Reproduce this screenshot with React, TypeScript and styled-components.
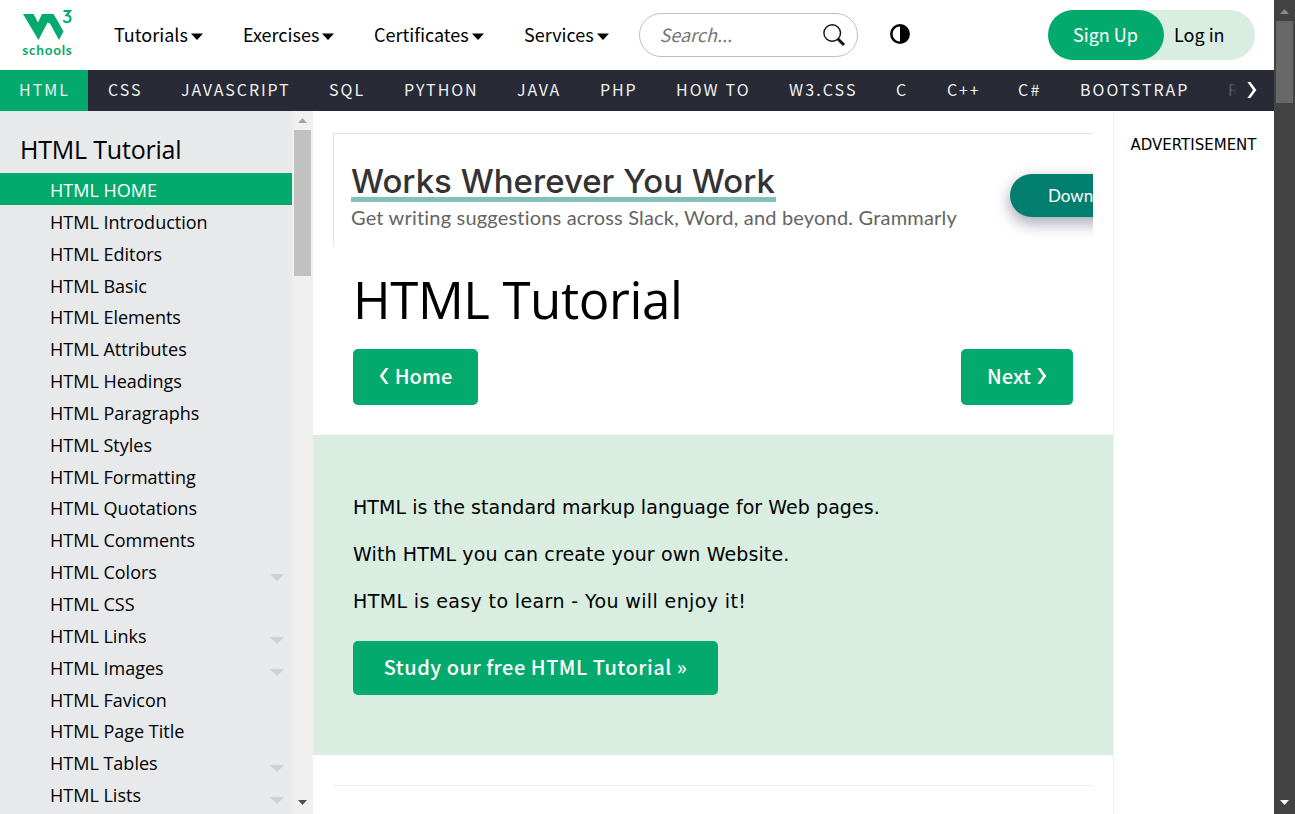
import React from 'react';
import styled, { createGlobalStyle } from 'styled-components';

const GREEN = '#04aa6d';
const MINT = '#d9eee1';
const SOURCE = '"Noto Sans CJK SC", sans-serif';
const SEGOE = '"Open Sans", sans-serif';
const VERDANA = '"DejaVu Sans", sans-serif';

const GlobalStyle = createGlobalStyle`
  * { box-sizing: border-box; }
  body { margin: 0; background: #fff; color: #000; overflow: hidden; }
  h1, h2, p { margin: 0; font-weight: 400; }
`;

const Page = styled.div`
  display: flex;
  width: 1295px;
  height: 814px;
  overflow: hidden;
`;
const Site = styled.div`
  display: flex;
  flex-direction: column;
  width: 1274px;
  height: 100%;
`;
const TopBar = styled.header`
  display: flex;
  height: 70px;
  flex: none;
  padding: 0 19px 0 19px;
  font: 18px/26px ${SOURCE};
`;
const Logo = styled.svg`
  width: 56px;
  height: 56px;
  margin-top: 6px;
  flex: none;
`;
const MainMenu = styled.nav`
  display: flex;
  height: 70px;
  margin-left: 39px;
`;
const MenuLink = styled.a<{ $w: number }>`
  display: flex;
  align-items: center;
  gap: 3px;
  width: ${(p) => p.$w}px;
  padding-bottom: 2px;
  white-space: nowrap;
`;
const Caret = styled.svg`
  width: 12px;
  height: 7px;
  margin-top: 5px;
`;
const SearchBox = styled.div`
  display: flex;
  justify-content: space-between;
  align-items: center;
  width: 219px;
  height: 44px;
  margin-top: 13px;
  padding: 0 11px 3px 20px;
  border: 1px solid #bfbfbf;
  border-radius: 22px;
  color: #757575;
  font-style: italic;
`;
const SearchIcon = styled.svg`
  width: 24px;
  height: 24px;
  margin-top: 3px;
`;
const ContrastIcon = styled.svg`
  width: 20px;
  height: 20px;
  margin: 24px 0 0 32px;
`;
const Account = styled.div`
  display: flex;
  width: 207px;
  height: 50px;
  margin: 10px 0 0 auto;
  border-radius: 25px;
  background: ${MINT};
  line-height: 48px;
`;
const SignUp = styled.a`
  width: 116px;
  padding-left: 25px;
  border-radius: 25px;
  background: ${GREEN};
  color: #fff;
`;
const LogIn = styled.a`
  padding-left: 10px;
`;
const SubNav = styled.nav`
  position: relative;
  display: flex;
  height: 41px;
  flex: none;
  overflow: hidden;
  background: #282a35;
  color: #f1f1f1;
  font: 16px/38px ${SOURCE};
`;
const Topic = styled.a<{ $w: number; $active?: boolean; $ls?: number }>`
  flex: none;
  width: ${(p) => p.$w}px;
  height: 41px;
  padding-left: ${(p) => (p.$active ? 19 : 20)}px;
  letter-spacing: ${(p) => p.$ls ?? 1.85}px;
  white-space: nowrap;
  background: ${(p) => (p.$active ? GREEN : 'transparent')};
`;
const ScrollNext = styled.div`
  position: absolute;
  top: 0;
  right: 0;
  display: flex;
  width: 64px;
  height: 41px;
  padding: 12px 0 0 37px;
  background: linear-gradient(90deg, rgba(40, 42, 53, 0), #282a35 42%);
`;
const Body = styled.div`
  display: flex;
  flex: 1;
  min-height: 0;
`;
const Sidebar = styled.aside`
  width: 292px;
  height: 703px;
  overflow: hidden;
  padding-top: 20px;
  background: #e7e9eb;
  font-family: ${SEGOE};
`;
const SidebarTitle = styled.h2`
  height: 42px;
  padding-left: 20px;
  font-size: 25px;
  line-height: 37px;
  letter-spacing: -0.2px;
`;
const Lesson = styled.a<{ $active?: boolean }>`
  display: flex;
  justify-content: space-between;
  height: 31.85px;
  padding: 0 8px 0 50px;
  font-size: 18px;
  line-height: 34px;
  color: ${(p) => (p.$active ? '#fff' : '#000')};
  background: ${(p) => (p.$active ? GREEN : 'transparent')};
`;
const LessonCaret = styled.svg`
  width: 14px;
  height: 7px;
  margin-top: 18.5px;
`;
const Track = styled.div<{ $dark?: boolean }>`
  display: flex;
  flex-direction: column;
  align-items: center;
  flex: none;
  width: 21px;
  height: 100%;
  padding: ${(p) => (p.$dark ? 9 : 7)}px 0 9px;
  background: ${(p) => (p.$dark ? '#424242' : '#f0f0f0')};
`;
const Thumb = styled.div<{ $dark?: boolean }>`
  width: 17px;
  height: ${(p) => (p.$dark ? 82 : 146)}px;
  margin: 7px 0 auto;
  background: ${(p) => (p.$dark ? '#686868' : '#c1c1c1')};
`;
const Arrow = styled.svg`
  width: 9px;
  height: 5px;
`;
const Main = styled.main`
  width: 800px;
  padding-top: 22px;
`;
const Ad = styled.section`
  display: flex;
  width: 760px;
  height: 113px;
  margin-left: 20px;
  overflow: hidden;
  border: solid #e3e3e3;
  border-width: 1px 0 0 1px;
`;
const AdCopy = styled.div`
  width: 676px;
  flex: none;
  padding: 30px 0 0 17px;
`;
const AdTitle = styled.h2`
  width: 425px;
  height: 38px;
  border-bottom: 5px solid #84c0b8;
  color: #333;
  font: 500 33px/34px Inter, sans-serif;
  white-space: nowrap;
`;
const AdText = styled.p`
  margin-top: 2px;
  color: #646464;
  font: 20px/26px Lato, sans-serif;
  letter-spacing: 0.19px;
  white-space: nowrap;
`;
const AdButton = styled.a`
  flex: none;
  width: 150px;
  height: 43px;
  margin-top: 40px;
  padding-left: 38px;
  border-radius: 22px;
  background: #027e6f;
  box-shadow: 0 6px 16px rgba(20, 24, 60, 0.4);
  color: #fff;
  font: 17px/43px Lato, sans-serif;
`;
const PageTitle = styled.h1`
  height: 103px;
  padding: 17px 0 0 40px;
  font: 51px/72px ${SEGOE};
  letter-spacing: -0.4px;
`;
const Pager = styled.div`
  display: flex;
  justify-content: space-between;
  padding: 0 40px 30px;
`;
const Button = styled.a<{ $w: number; $h?: number; $ls?: number }>`
  display: flex;
  align-items: center;
  justify-content: center;
  gap: 6px;
  width: ${(p) => p.$w}px;
  height: ${(p) => p.$h ?? 56}px;
  padding-bottom: 2px;
  border-radius: 5px;
  background: ${GREEN};
  color: #fff;
  font: 500 20px/30px ${SOURCE};
  letter-spacing: ${(p) => p.$ls ?? 0.1}px;
  white-space: nowrap;
`;
const Chevron = styled.svg`
  width: 10px;
  height: 16px;
`;
const Intro = styled.section`
  height: 320px;
  padding: 60px 40px 0;
  background: ${MINT};
`;
const Sentence = styled.p<{ $ls: number }>`
  height: 47px;
  font: 19px/25px ${VERDANA};
  letter-spacing: ${(p) => p.$ls}px;
  white-space: nowrap;
`;
const IntroAction = styled.div`
  padding-top: 5px;
`;
const Divider = styled.div`
  height: 1px;
  margin: 30px 20px 0;
  background: #eee;
`;
const RightColumn = styled.aside`
  flex: 1;
  margin-top: 2px;
  padding: 23px 0 0 16.5px;
  border-left: 1px solid #f1f1f1;
  font: 15px/18px ${VERDANA};
`;

const topics: [string, number, number?][] = [
  ['HTML', 88, 2], ['CSS', 73, 2], ['JAVASCRIPT', 148, 1.9], ['SQL', 75, 2], ['PYTHON', 113, 1.95],
  ['JAVA', 83], ['PHP', 76], ['HOW TO', 113, 2.1], ['W3.CSS', 107, 2.1], ['C', 51],
  ['C++', 71], ['C#', 62, 2.3], ['BOOTSTRAP', 148, 2], ['REACT', 100],
];
const lessons = [
  'HOME', 'Introduction', 'Editors', 'Basic', 'Elements', 'Attributes', 'Headings', 'Paragraphs', 'Styles',
  'Formatting', 'Quotations', 'Comments', 'Colors', 'CSS', 'Links', 'Images', 'Favicon', 'Page Title',
  'Tables', 'Lists',
];
const expandable = ['Colors', 'Links', 'Images', 'Tables', 'Lists'];
const menu: [string, number][] = [['Tutorials', 129], ['Exercises', 131], ['Certificates', 150], ['Services', 114.5]];

const ArrowGlyph = ({ up, color }: { up?: boolean; color: string }) => (
  <Arrow viewBox="0 0 9 5">
    <path d={up ? 'M0 5L4.5 0L9 5Z' : 'M0 0H9L4.5 5Z'} fill={color} />
  </Arrow>
);
const ChevronGlyph = ({ left }: { left?: boolean }) => (
  <Chevron viewBox="0 0 10 16">
    <path
      d={left ? 'M6.6 0H9.6L4 8L9.6 16H6.6L0.6 8Z' : 'M0.4 0H3.4L9.4 8L3.4 16H0.4L6 8Z'}
      fill="#fff"
    />
  </Chevron>
);
const LogoText = styled.text`
  fill: ${GREEN};
  font-family: Lato, sans-serif;
  font-weight: 700;
`;

export default function App() {
  return (
    <Page>
      <GlobalStyle />
      <Site>
        <TopBar>
          <Logo viewBox="19 6 56 56">
            <path d="M23 14H33.5L38 22.5L42 14H53.5L58.5 22.5L63.5 31.5L59 40L50 23.5L47.5 22.5L38.5 40Z" fill={GREEN} />
            <path d="M63.5 11H70L66.5 15.3C69.5 15.3 70.6 17 70.6 18.8C70.6 22.6 65.3 23.4 63.3 20.3" fill="none" stroke={GREEN} strokeWidth="2" />
            <LogoText x="22.3" y="54.5" fontSize="13.5" textLength="49.5">schools</LogoText>
          </Logo>
          <MainMenu>
            {menu.map(([label, w]) => (
              <MenuLink key={label} $w={w}>
                {label}
                <Caret viewBox="0 0 12 7"><path d="M0 0.5H12L6 7Z" /></Caret>
              </MenuLink>
            ))}
          </MainMenu>
          <SearchBox>
            Search...
            <SearchIcon viewBox="0 0 24 24" fill="none" stroke="#111">
              <circle cx="10.2" cy="10" r="8.3" strokeWidth="1.4" />
              <path d="M16 16L22 22" strokeWidth="3" />
            </SearchIcon>
          </SearchBox>
          <ContrastIcon viewBox="0 0 20 20">
            <circle cx="10" cy="10" r="8.7" fill="#fff" stroke="#000" strokeWidth="2.5" />
            <path d="M10 1A9 9 0 0 1 10 19Z" />
          </ContrastIcon>
          <Account>
            <SignUp>Sign Up</SignUp>
            <LogIn>Log in</LogIn>
          </Account>
        </TopBar>
        <SubNav>
          {topics.map(([label, w, ls], i) => (
            <Topic key={label} $w={w} $ls={ls} $active={i === 0}>{label}</Topic>
          ))}
          <ScrollNext><ChevronGlyph /></ScrollNext>
        </SubNav>
        <Body>
          <Sidebar>
            <SidebarTitle>HTML Tutorial</SidebarTitle>
            {lessons.map((name, i) => (
              <Lesson key={name} $active={i === 0}>
                HTML {name}
                {expandable.includes(name) && (
                  <LessonCaret viewBox="0 0 14 7"><path d="M0 0H14L7 7Z" fill="#ced0d1" /></LessonCaret>
                )}
              </Lesson>
            ))}
          </Sidebar>
          <Track>
            <ArrowGlyph up color="#a3a3a3" />
            <Thumb />
            <ArrowGlyph color="#505050" />
          </Track>
          <Main>
            <Ad>
              <AdCopy>
                <AdTitle>Works Wherever You Work</AdTitle>
                <AdText>Get writing suggestions across Slack, Word, and beyond. Grammarly</AdText>
              </AdCopy>
              <AdButton>Download</AdButton>
            </Ad>
            <PageTitle>HTML Tutorial</PageTitle>
            <Pager>
              <Button $w={125}><ChevronGlyph left />Home</Button>
              <Button $w={112}>Next<ChevronGlyph /></Button>
            </Pager>
            <Intro>
              <Sentence $ls={0.06}>HTML is the standard markup language for Web pages.</Sentence>
              <Sentence $ls={0.12}>With HTML you can create your own Website.</Sentence>
              <Sentence $ls={0.38}>HTML is easy to learn - You will enjoy it!</Sentence>
              <IntroAction>
                <Button $w={365} $h={54} $ls={0.52}>Study our free HTML Tutorial »</Button>
              </IntroAction>
            </Intro>
            <Divider />
          </Main>
          <RightColumn>ADVERTISEMENT</RightColumn>
        </Body>
      </Site>
      <Track $dark>
        <ArrowGlyph up color="#8b8b8b" />
        <Thumb $dark />
        <ArrowGlyph color="#fff" />
      </Track>
    </Page>
  );
}
